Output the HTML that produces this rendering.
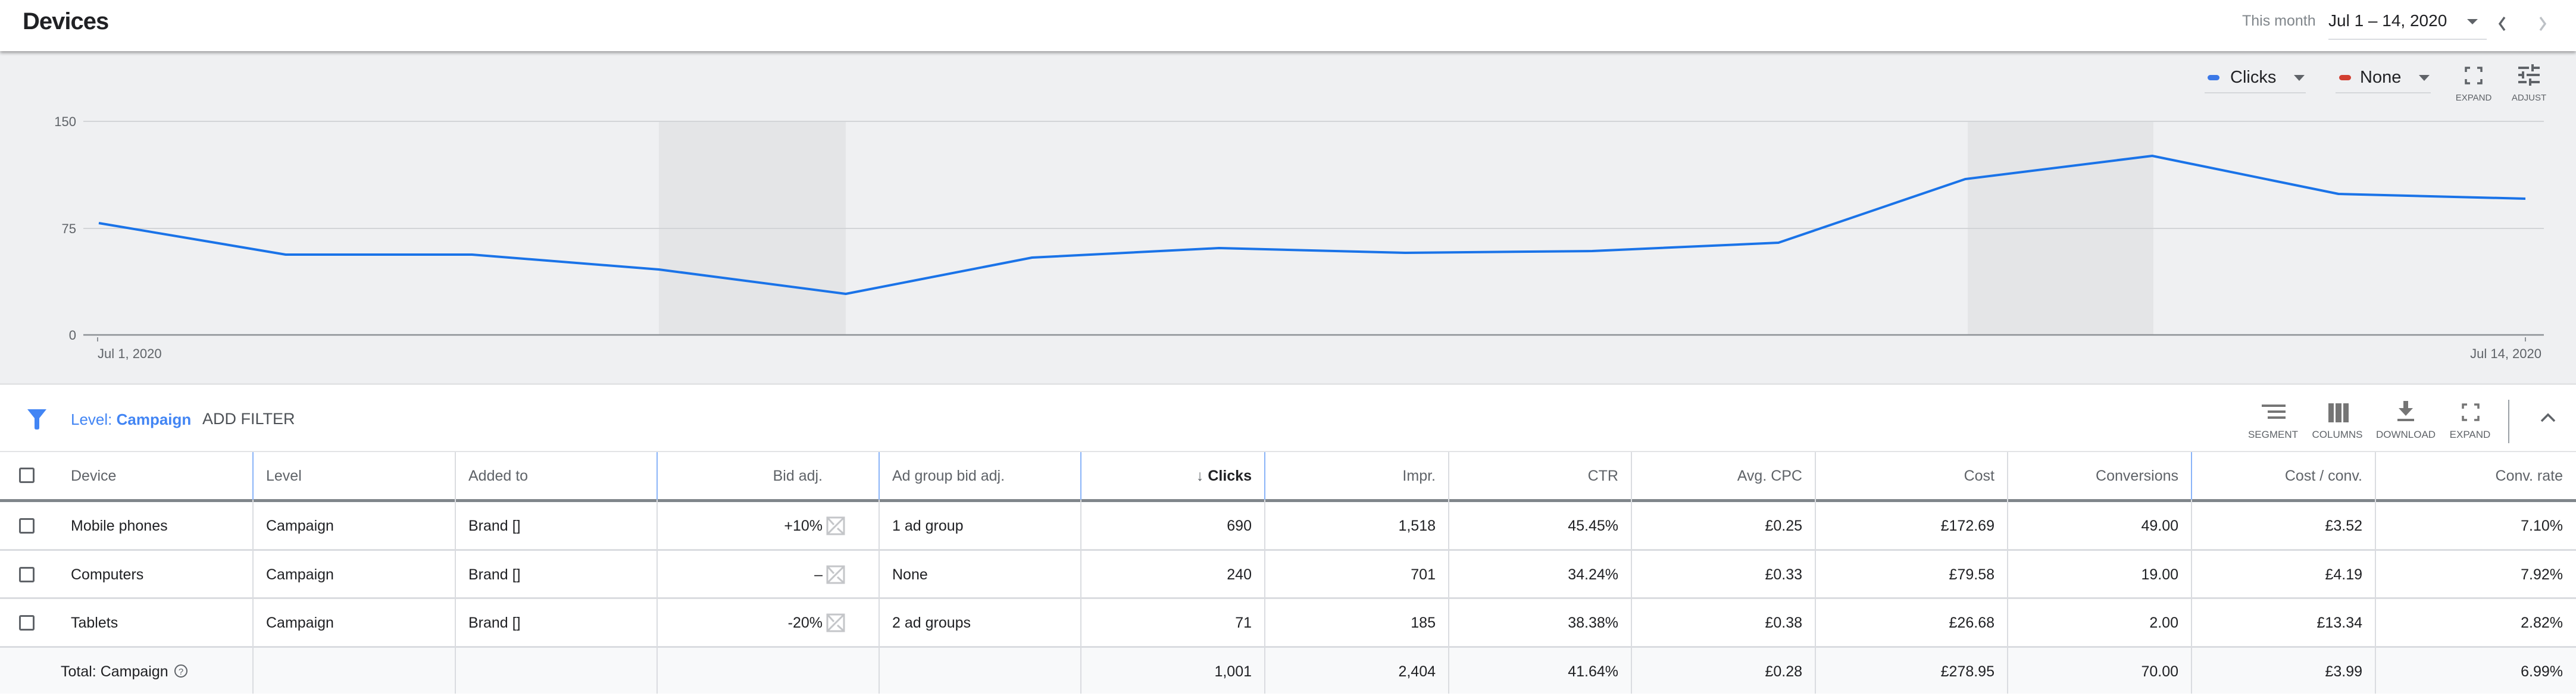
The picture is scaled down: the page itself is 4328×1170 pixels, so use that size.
<!DOCTYPE html>
<html><head><meta charset="utf-8"><style>
*{margin:0;padding:0;box-sizing:border-box}
body{width:4328px;height:1166px;overflow:hidden;background:#fff;font-family:"Liberation Sans",Arial,sans-serif;color:#3c4043;position:relative}
.a{position:absolute;white-space:nowrap}
.hdr{position:absolute;left:0;top:0;width:4328px;height:86px;background:#fff;box-shadow:0 3px 5px rgba(0,0,0,.35);z-index:2}
.chart{position:absolute;left:0;top:86px;width:4328px;height:560px;background:#eff0f2}
.lbl{font-size:17px;color:#5f6368;transform:translateX(-50%)}
.cell{position:absolute;height:82px;line-height:82px;font-size:25px;color:#202124;padding:0 22px;white-space:nowrap;overflow:hidden}
.r{text-align:right}
.h{color:#5f6368}
.vl{position:absolute;width:2px;background:#dadce0}
.hl{position:absolute;left:0;width:4328px;height:3px;background:#dadce0}
.cb{position:absolute;left:32px;width:26px;height:26px;border:3px solid #5f6368;border-radius:3px}
</style></head><body>
<div class="hdr">
 <div class="a" style="left:38px;top:14px;font-size:40px;font-weight:bold;color:#202124;letter-spacing:-1px">Devices</div>
 <div class="a" style="left:3767px;top:21px;font-size:25px;color:#80868b">This month</div>
 <div class="a" style="left:3912px;top:19px;font-size:28px;color:#202124">Jul 1 – 14, 2020</div>
 <div class="a" style="left:4145px;top:32px;width:0;height:0;border-left:9px solid transparent;border-right:9px solid transparent;border-top:9px solid #5f6368"></div>
 <div class="a" style="left:3912px;top:65px;width:266px;height:2px;background:#dadce0"></div>
 <svg class="a" style="left:4190px;top:25px" width="100" height="30"><path d="M18 4 L10 15 L18 26" stroke="#5f6368" stroke-width="3.5" fill="none"/><path d="M78 4 L86 15 L78 26" stroke="#bdc1c6" stroke-width="3.5" fill="none"/></svg>
</div>
<div class="chart">
 <div class="a" style="left:3709px;top:40px;width:20px;height:9px;border-radius:5px;background:#3b78e7"></div>
 <div class="a" style="left:3747px;top:28px;font-size:29px;color:#202124">Clicks</div>
 <div class="a" style="left:3854px;top:40px;border-left:9px solid transparent;border-right:9px solid transparent;border-top:10px solid #5f6368"></div>
 <div class="a" style="left:3704px;top:69px;width:170px;height:2px;background:#d5d7da"></div>
 <div class="a" style="left:3930px;top:40px;width:20px;height:9px;border-radius:5px;background:#d23f31"></div>
 <div class="a" style="left:3965px;top:28px;font-size:29px;color:#202124">None</div>
 <div class="a" style="left:4064px;top:40px;border-left:9px solid transparent;border-right:9px solid transparent;border-top:10px solid #5f6368"></div>
 <div class="a" style="left:3924px;top:69px;width:160px;height:2px;background:#d5d7da"></div>
 <svg class="a" style="left:4141px;top:26px" width="30" height="30"><path d="M2 9V2H9M21 2H28V9M28 21V28H21M9 28H2V21" stroke="#5f6368" stroke-width="3.5" fill="none"/></svg>
 <div class="a lbl" style="left:4156px;top:70px;font-size:15px">EXPAND</div>
 <svg class="a" style="left:4231px;top:22px" width="36" height="36"><path d="M0 6H18M24 6H36M24 0V12M0 18H8M14 18H36M8 12V24M0 30H14M20 30H36M20 24V36" stroke="#5f6368" stroke-width="4" fill="none"/></svg>
 <div class="a lbl" style="left:4249px;top:70px;font-size:15px">ADJUST</div>
 <svg class="a" style="left:0;top:0" width="4328" height="560">
  <rect x="1107" y="118" width="314" height="359" fill="#e4e5e7"/>
  <rect x="3306" y="118" width="312" height="359" fill="#e4e5e7"/>
  <line x1="140" y1="118" x2="4274" y2="118" stroke="#d2d4d7" stroke-width="2"/>
  <line x1="140" y1="298" x2="4274" y2="298" stroke="#d2d4d7" stroke-width="2"/>
  <line x1="140" y1="477" x2="4274" y2="477" stroke="#8d9196" stroke-width="2.5"/>
  <line x1="164" y1="481" x2="164" y2="488" stroke="#8d9196" stroke-width="2"/>
  <line x1="4243" y1="481" x2="4243" y2="488" stroke="#8d9196" stroke-width="2"/>
  <g font-family="Liberation Sans,Arial,sans-serif" font-size="22" fill="#5f6368">
   <text x="128" y="126" text-anchor="end">150</text>
   <text x="128" y="306" text-anchor="end">75</text>
   <text x="128" y="485" text-anchor="end">0</text>
   <text x="164" y="516">Jul 1, 2020</text>
   <text x="4270" y="516" text-anchor="end">Jul 14, 2020</text>
  </g>
  <polyline fill="none" stroke="#1a73e8" stroke-width="4" stroke-linejoin="round" points="166,289 480,342 793,342 1107,367 1421,408 1734,347 2048,331 2361,339 2675,336 2988,322 3302,215 3616,176 3929,240 4243,248"/>
 </svg>
</div>
<div class="hl" style="top:644px;height:3px;background:#e3e4e6"></div>
<svg class="a" style="left:46px;top:688px" width="32" height="34"><path d="M0 0H32L20 15V31Q20 34 17 34H15Q12 34 12 31V15Z" fill="#4285f4"/></svg>
<div class="a" style="left:119px;top:690px;font-size:26px;color:#4285f4">Level: <b>Campaign</b></div>
<div class="a" style="left:340px;top:689px;font-size:27px;color:#4d5156">ADD FILTER</div>
<svg class="a" style="left:3800px;top:680px" width="40" height="24"><path d="M0 2H40M10 12H40M10 22H40" stroke="#757575" stroke-width="4"/></svg>
<div class="a lbl" style="left:3819px;top:721px">SEGMENT</div>
<svg class="a" style="left:3912px;top:678px" width="34" height="32"><rect x="0" y="0" width="9" height="32" fill="#757575"/><rect x="12" y="0" width="10" height="32" fill="#757575"/><rect x="25" y="0" width="9" height="32" fill="#757575"/></svg>
<div class="a lbl" style="left:3927px;top:721px">COLUMNS</div>
<svg class="a" style="left:4027px;top:674px" width="30" height="36"><path d="M11 0H19V12H27L15 25L3 12H11Z" fill="#757575"/><rect x="1" y="30" width="28" height="4" fill="#757575"/></svg>
<div class="a lbl" style="left:4042px;top:721px">DOWNLOAD</div>
<svg class="a" style="left:4136px;top:678px" width="30" height="30"><path d="M2 9V2H9M21 2H28V9M28 21V28H21M9 28H2V21" stroke="#757575" stroke-width="3.5" fill="none"/></svg>
<div class="a lbl" style="left:4150px;top:721px">EXPAND</div>
<div class="a" style="left:4214px;top:672px;width:2px;height:73px;background:#9aa0a6"></div>
<svg class="a" style="left:4267px;top:693px" width="28" height="18"><path d="M3 15L14 4L25 15" stroke="#5f6368" stroke-width="3.5" fill="none"/></svg>
<div class="hl" style="top:758px;height:2px;background:#e3e4e6"></div>
<div class="a" style="left:0;top:1088px;width:4328px;height:78px;background:#f8f9fa"></div>
<div class="hl" style="top:839px;height:5px;background:#80868b"></div>
<div class="hl" style="top:923px"></div>
<div class="hl" style="top:1004px"></div>
<div class="hl" style="top:1086px"></div>
<div class="vl" style="left:424px;top:760px;height:406px"></div>
<div class="vl" style="left:764px;top:760px;height:406px"></div>
<div class="vl" style="left:1103px;top:760px;height:406px"></div>
<div class="vl" style="left:1476px;top:760px;height:406px"></div>
<div class="vl" style="left:1815px;top:760px;height:406px"></div>
<div class="vl" style="left:2124px;top:760px;height:406px"></div>
<div class="vl" style="left:2433px;top:760px;height:406px"></div>
<div class="vl" style="left:2740px;top:760px;height:406px"></div>
<div class="vl" style="left:3049px;top:760px;height:406px"></div>
<div class="vl" style="left:3372px;top:760px;height:406px"></div>
<div class="vl" style="left:3681px;top:760px;height:406px"></div>
<div class="vl" style="left:3990px;top:760px;height:406px"></div>
<div class="vl" style="left:424px;top:760px;height:80px;background:#8ab4f8"></div>
<div class="vl" style="left:1103px;top:760px;height:80px;background:#8ab4f8"></div>
<div class="vl" style="left:1476px;top:760px;height:80px;background:#8ab4f8"></div>
<div class="vl" style="left:1815px;top:760px;height:80px;background:#8ab4f8"></div>
<div class="vl" style="left:2124px;top:760px;height:80px;background:#8ab4f8"></div>
<div class="vl" style="left:3681px;top:760px;height:80px;background:#8ab4f8"></div>
<div class="cb" style="top:786px"></div>
<div class="cb" style="top:871px"></div>
<div class="cb" style="top:953px"></div>
<div class="cb" style="top:1034px"></div>
<div class="cell h" style="left:97px;top:759px">Device</div>
<div class="cell h" style="left:425px;top:759px">Level</div>
<div class="cell h" style="left:765px;top:759px">Added to</div>
<div class="cell h r" style="left:1104px;width:300px;top:759px">Bid adj.</div>
<div class="cell h" style="left:1477px;top:759px">Ad group bid adj.</div>
<div class="cell r" style="left:1816px;width:309px;top:759px;font-weight:bold"><span style="color:#5f6368;font-weight:normal">↓</span> Clicks</div>
<div class="cell h r" style="left:2125px;width:309px;top:759px">Impr.</div>
<div class="cell h r" style="left:2434px;width:307px;top:759px">CTR</div>
<div class="cell h r" style="left:2741px;width:309px;top:759px">Avg. CPC</div>
<div class="cell h r" style="left:3050px;width:323px;top:759px">Cost</div>
<div class="cell h r" style="left:3373px;width:309px;top:759px">Conversions</div>
<div class="cell h r" style="left:3682px;width:309px;top:759px">Cost / conv.</div>
<div class="cell h r" style="left:3991px;width:337px;top:759px">Conv. rate</div>
<div class="cell" style="left:97px;top:843px">Mobile phones</div>
<div class="cell" style="left:425px;top:843px">Campaign</div>
<div class="cell" style="left:765px;top:843px">Brand []</div>
<div class="cell r" style="left:1104px;width:300px;top:843px">+10%</div>
<div class="cell" style="left:1477px;top:843px">1 ad group</div>
<div class="cell r" style="left:1816px;width:309px;top:843px">690</div>
<div class="cell r" style="left:2125px;width:309px;top:843px">1,518</div>
<div class="cell r" style="left:2434px;width:307px;top:843px">45.45%</div>
<div class="cell r" style="left:2741px;width:309px;top:843px">£0.25</div>
<div class="cell r" style="left:3050px;width:323px;top:843px">£172.69</div>
<div class="cell r" style="left:3373px;width:309px;top:843px">49.00</div>
<div class="cell r" style="left:3682px;width:309px;top:843px">£3.52</div>
<div class="cell r" style="left:3991px;width:337px;top:843px">7.10%</div>
<div class="cell" style="left:97px;top:925px">Computers</div>
<div class="cell" style="left:425px;top:925px">Campaign</div>
<div class="cell" style="left:765px;top:925px">Brand []</div>
<div class="cell r" style="left:1104px;width:300px;top:925px">–</div>
<div class="cell" style="left:1477px;top:925px">None</div>
<div class="cell r" style="left:1816px;width:309px;top:925px">240</div>
<div class="cell r" style="left:2125px;width:309px;top:925px">701</div>
<div class="cell r" style="left:2434px;width:307px;top:925px">34.24%</div>
<div class="cell r" style="left:2741px;width:309px;top:925px">£0.33</div>
<div class="cell r" style="left:3050px;width:323px;top:925px">£79.58</div>
<div class="cell r" style="left:3373px;width:309px;top:925px">19.00</div>
<div class="cell r" style="left:3682px;width:309px;top:925px">£4.19</div>
<div class="cell r" style="left:3991px;width:337px;top:925px">7.92%</div>
<div class="cell" style="left:97px;top:1006px">Tablets</div>
<div class="cell" style="left:425px;top:1006px">Campaign</div>
<div class="cell" style="left:765px;top:1006px">Brand []</div>
<div class="cell r" style="left:1104px;width:300px;top:1006px">-20%</div>
<div class="cell" style="left:1477px;top:1006px">2 ad groups</div>
<div class="cell r" style="left:1816px;width:309px;top:1006px">71</div>
<div class="cell r" style="left:2125px;width:309px;top:1006px">185</div>
<div class="cell r" style="left:2434px;width:307px;top:1006px">38.38%</div>
<div class="cell r" style="left:2741px;width:309px;top:1006px">£0.38</div>
<div class="cell r" style="left:3050px;width:323px;top:1006px">£26.68</div>
<div class="cell r" style="left:3373px;width:309px;top:1006px">2.00</div>
<div class="cell r" style="left:3682px;width:309px;top:1006px">£13.34</div>
<div class="cell r" style="left:3991px;width:337px;top:1006px">2.82%</div>
<div class="cell" style="left:80px;top:1088px">Total: Campaign</div>
<svg class="a" style="left:292px;top:1116px" width="24" height="24"><circle cx="12" cy="12" r="10" stroke="#5f6368" stroke-width="2" fill="none"/><text x="12" y="18" font-size="15" text-anchor="middle" fill="#5f6368" font-family="Liberation Sans,Arial">?</text></svg>
<div class="cell r" style="left:1816px;width:309px;top:1088px">1,001</div>
<div class="cell r" style="left:2125px;width:309px;top:1088px">2,404</div>
<div class="cell r" style="left:2434px;width:307px;top:1088px">41.64%</div>
<div class="cell r" style="left:2741px;width:309px;top:1088px">£0.28</div>
<div class="cell r" style="left:3050px;width:323px;top:1088px">£278.95</div>
<div class="cell r" style="left:3373px;width:309px;top:1088px">70.00</div>
<div class="cell r" style="left:3682px;width:309px;top:1088px">£3.99</div>
<div class="cell r" style="left:3991px;width:337px;top:1088px">6.99%</div>
<svg class="a" style="left:1387px;top:866px" width="34" height="36"><rect x="3" y="4" width="28" height="28" stroke="#c4c6c9" stroke-width="3" fill="none"/><path d="M3 32L31 4M3 4L14 16M20 22L31 32" stroke="#c4c6c9" stroke-width="3"/></svg>
<svg class="a" style="left:1387px;top:948px" width="34" height="36"><rect x="3" y="4" width="28" height="28" stroke="#c4c6c9" stroke-width="3" fill="none"/><path d="M3 32L31 4M3 4L14 16M20 22L31 32" stroke="#c4c6c9" stroke-width="3"/></svg>
<svg class="a" style="left:1387px;top:1029px" width="34" height="36"><rect x="3" y="4" width="28" height="28" stroke="#c4c6c9" stroke-width="3" fill="none"/><path d="M3 32L31 4M3 4L14 16M20 22L31 32" stroke="#c4c6c9" stroke-width="3"/></svg>
</body></html>
